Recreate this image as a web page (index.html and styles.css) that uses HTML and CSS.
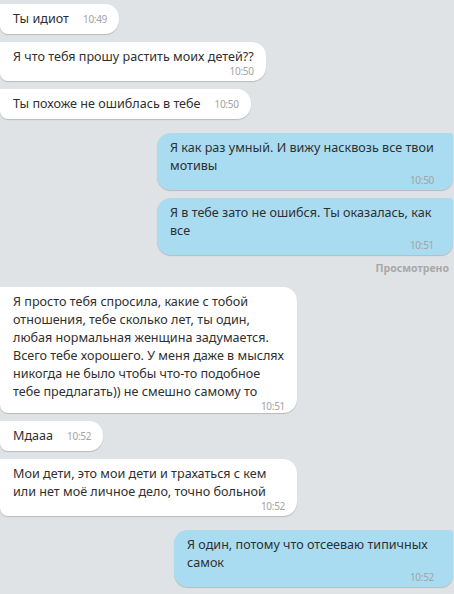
FILE: index.html
```html
<!DOCTYPE html>
<html>
<head>
  <title>Чат</title>
  <meta charset="UTF-8">
  <meta name="viewport" content="width=device-width, initial-scale=1.0">
  <link rel="stylesheet" href="styles.css">
</head>
<body>
  <div class="chat">
    <div class="msg in">
      <span class="text">Ты идиот</span><span class="time inline">10:49</span>
    </div>
    <div class="msg in">
      <div class="text">Я что тебя прошу растить моих детей??</div>
      <div class="time">10:50</div>
    </div>
    <div class="msg in">
      <span class="text">Ты похоже не ошиблась в тебе</span><span class="time inline">10:50</span>
    </div>

    <div class="msg out first">
      <div class="text">Я как раз умный. И вижу насквозь все твои мотивы</div>
      <div class="time">10:50</div>
    </div>
    <div class="msg out">
      <div class="text">Я в тебе зато не ошибся. Ты оказалась, как все</div>
      <div class="time">10:51</div>
    </div>
    <div class="seen">Просмотрено</div>

    <div class="msg in after-seen">
      <div class="text">Я просто тебя спросила, какие с тобой отношения, тебе сколько лет, ты один, любая нормальная женщина задумается. Всего тебе хорошего. У меня даже в мыслях никогда не было чтобы что-то подобное тебе предлагать)) не смешно самому то</div>
      <div class="time">10:51</div>
    </div>
    <div class="msg in">
      <span class="text">Мдааа</span><span class="time inline">10:52</span>
    </div>
    <div class="msg in">
      <div class="text">Мои дети, это мои дети и трахаться с кем или нет моё личное дело, точно больной</div>
      <div class="time">10:52</div>
    </div>

    <div class="msg out first narrow">
      <div class="text">Я один, потому что отсееваю типичных самок</div>
      <div class="time">10:52</div>
    </div>
  </div>
</body>
</html>
```

FILE: styles.css
```css
body {
  margin: 0;
  background-color: #e0e3e5;
  font-family: "Noto Sans", "Open Sans", sans-serif;
  font-size: 12.6px;
  color: #2f2f2f;
}

.chat {
  display: flex;
  flex-direction: column;
  gap: 8px;
  padding: 4px 1px 6px 0;
}

.msg {
  max-width: 272px;
  padding: 6px 12px 5px 13px;
  line-height: 18px;
  box-shadow: 0 1px 1px rgba(0, 0, 0, 0.18);
}

.msg.in {
  align-self: flex-start;
  background-color: #ffffff;
  border-radius: 0 14px 14px 8px;
}

.msg.out {
  align-self: flex-end;
  max-width: 264px;
  padding-right: 19px;
  background-color: #aadcf1;
  border-radius: 14px 3px 12px 14px;
}

.msg.narrow {
  max-width: 247px;
}

.msg.first {
  margin-top: 6px;
}

.msg.after-seen {
  margin-top: 4px;
  padding-bottom: 2px;
}

.time {
  font-size: 10px;
  line-height: 10px;
  color: #a3a3a3;
  text-align: right;
  letter-spacing: -0.3px;
}

.time.inline {
  margin-left: 14px;
  line-height: 19px;
}

.seen {
  align-self: flex-end;
  margin: -2px 4px 0 0;
  font-size: 10.5px;
  line-height: 14px;
  font-weight: bold;
  color: #a8a8a8;
}
```
